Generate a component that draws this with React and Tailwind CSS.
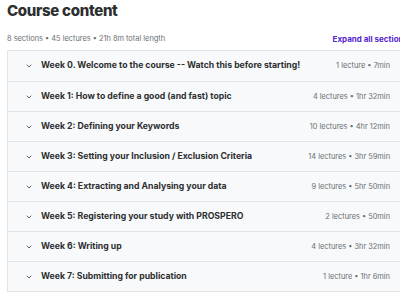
import React from 'react';
import { ChevronDown } from 'lucide-react';

const sections = [
    { title: 'Week 0. Welcome to the course -- Watch this before starting!', meta: '1 lecture • 7min' },
    { title: 'Week 1: How to define a good (and fast) topic', meta: '4 lectures • 1hr 32min' },
    { title: 'Week 2: Defining your Keywords', meta: '10 lectures • 4hr 12min' },
    { title: 'Week 3: Setting your Inclusion / Exclusion Criteria', meta: '14 lectures • 3hr 59min' },
    { title: 'Week 4: Extracting and Analysing your data', meta: '9 lectures • 5hr 50min' },
    { title: 'Week 5: Registering your study with PROSPERO', meta: '2 lectures • 50min' },
    { title: 'Week 6: Writing up', meta: '4 lectures • 3hr 32min' },
    { title: 'Week 7: Submitting for publication', meta: '1 lecture • 1hr 6min' },
];

const App = () => {
    return (
        <div className="w-[400px] h-[292px] overflow-hidden bg-white font-['Inter','Noto_Sans',sans-serif] text-[#2d2f31]">
            <div className="w-[408px] pl-[7px]">
                <h2 className="text-[15px] font-extrabold leading-[20px] pt-[1px] tracking-[-0.3px]">Course content</h2>
                <div className="flex justify-between items-center mt-[12px] h-[12px]">
                    <span className="text-[7.4px] text-[#6a6f73]">8 sections • 45 lectures • 21h 8m total length</span>
                    <span className="text-[8px] font-bold text-[#5624d0]">Expand all sections</span>
                </div>
                <div className="mt-[5px] border border-[#e1e5e8]">
                    {sections.map((s, i) => (
                        <div
                            key={i}
                            className={`flex items-center h-[30px] bg-[#f7f9fa] pl-[17px] pr-[17px] ${i > 0 ? 'border-t border-[#e1e5e8]' : ''}`}
                        >
                            <ChevronDown size={8} strokeWidth={2.2} className="text-[#2d2f31] mr-[8px]" />
                            <span className="flex-1 text-[8.7px] font-bold">{s.title}</span>
                            <span className="text-[7.4px] text-[#6a6f73]">{s.meta}</span>
                        </div>
                    ))}
                </div>
            </div>
        </div>
    );
};

export default App;
